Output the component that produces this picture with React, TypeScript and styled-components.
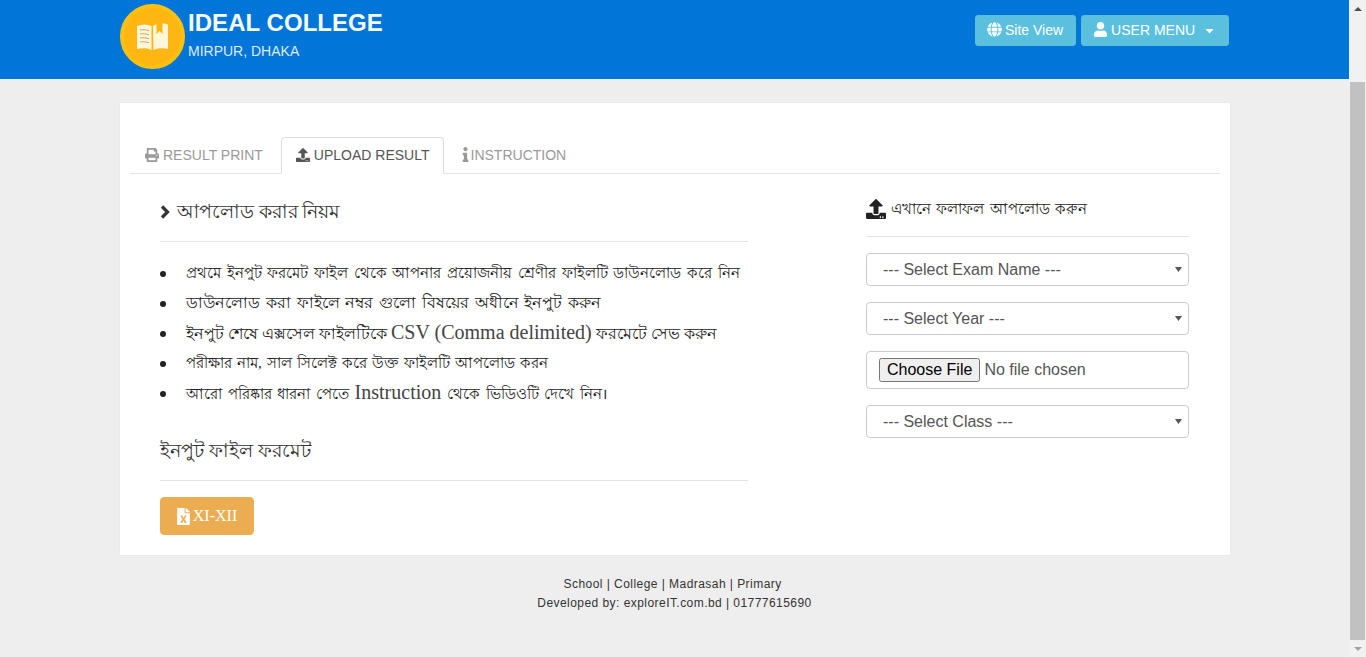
import React from "react";
import styled, { createGlobalStyle } from "styled-components";
import { FaFileExcel, FaGlobe, FaInfo, FaPrint, FaUpload, FaUser, FaCaretDown } from "react-icons/fa";

const Global = createGlobalStyle`
  html, body { margin: 0; padding: 0; height: 100%; overflow: hidden; background: #eeeeee; }
  body { font-family: "Liberation Sans", Arial, sans-serif; font-size: 14px; color: #333; }
  * { box-sizing: border-box; }
`;

const Shell = styled.div`display: flex; height: 657px; width: 1366px;`;
const Page = styled.div`flex: 1; min-width: 0; display: flex; flex-direction: column;`;

const Scrollbar = styled.div`
  width: 17px; background: #f1f1f1; display: flex; flex-direction: column; align-items: center;
`;
const ScrollArrow = styled.div<{ $down?: boolean }>`
  height: 17px; width: 100%; display: flex; align-items: center; justify-content: center;
  &::before {
    content: ""; width: 0; height: 0; border-left: 4px solid transparent; border-right: 4px solid transparent;
    ${(p) => (p.$down ? "border-top: 4px solid #a3a3a3;" : "border-bottom: 4px solid #505050;")}
  }
`;
const ScrollThumb = styled.div`width: 15px; margin-top: 65px; flex: 1; background: #c1c1c1;`;

const Header = styled.header`
  height: 80px; background: #0275d8; flex: none; padding: 4px 120px 0; display: flex; justify-content: space-between;
  border-bottom: 1px solid #e4f1f8;
`;
const Brand = styled.div`display: flex; gap: 3px;`;
const Logo = styled.div`
  width: 65px; height: 65px; border-radius: 50%; background: #ffb612; border: 4px solid #fec10f;
  display: flex; align-items: center; justify-content: center;
`;
const BrandText = styled.div`color: #fff; display: flex; flex-direction: column;`;
const CollegeName = styled.h1`margin: 5px 0 0; font-size: 24px; line-height: 27px; font-weight: 700; color: #f6fbff; letter-spacing: .05px;`;
const CollegePlace = styled.div`margin-top: 7px; font-size: 14px; line-height: 16px; color: #dcecfa;`;
const Actions = styled.div`display: flex; gap: 5px; padding: 11px 0 0 0;`;
const HeadButton = styled.button`
  height: 31px; border: 1px solid #5bc0de; border-radius: 3px; background: #5bc0de; color: #fff;
  font: 14px "Liberation Sans", Arial, sans-serif; display: inline-flex; align-items: center; gap: 3px;
  padding: 0 12px 2px 11px;
`;
const Caret = styled(FaCaretDown)`margin-left: 1px; margin-top: 1px;`;

const Main = styled.main`flex: 1; padding: 23px 119px 0 120px;`;
const Card = styled.section`
  width: 1110px; height: 452px; background: #fff; padding: 34px 10px 0; box-shadow: 0 0 1px rgba(0,0,0,.12);
`;
const Tabs = styled.nav`display: flex; gap: 2px; height: 37px; border-bottom: 1px solid #e4e4e4;`;
const Tab = styled.div<{ $active?: boolean }>`
  height: 37px; padding: 0 ${(p) => (p.$active ? 13 : 15)}px 2px 14px; display: flex; align-items: center; gap: 4px; font-size: 14px;
  border: 1px solid ${(p) => (p.$active ? "#ddd" : "transparent")};
  border-bottom: 1px solid ${(p) => (p.$active ? "#fff" : "transparent")};
  border-radius: 4px 4px 0 0;
  color: ${(p) => (p.$active ? "#555" : "#999")};
  background: ${(p) => (p.$active ? "#fff" : "transparent")};
`;
const InfoIcon = styled(FaInfo)`width: 7px; height: 15px; margin: 0 -2px 0 1px;`;
const Columns = styled.div`display: flex; padding-left: 30px; gap: 118px;`;
const LeftCol = styled.div`width: 588px;`;
const RightCol = styled.div`width: 323px;`;

const Heading = styled.h3<{ $top: number; $size: number }>`
  margin: ${(p) => p.$top}px 0 0; font-weight: 400; font-size: ${(p) => p.$size}px; line-height: 26px; color: #333;
  font-family: "Liberation Serif", "Noto Sans", serif; display: flex; align-items: center; gap: 7px;
`;
const Rule = styled.hr<{ $top: number; $bottom: number }>`
  border: 0; border-top: 1px solid #e3e3e3; margin: ${(p) => p.$top}px 0 ${(p) => p.$bottom}px;
`;
const Rules = styled.ul`
  list-style: none; margin: 0 0 30px; padding: 0;
`;
const RuleItem = styled.li<{ $spread?: number; $size?: number }>`
  height: 30px; line-height: 30px; font-size: ${(p) => p.$size ?? 16}px; white-space: nowrap; color: #222;
  font-family: "Liberation Serif", "Noto Sans", serif;
  word-spacing: ${(p) => p.$spread ?? 0}px;
  display: flex; align-items: center; gap: 20px;
  &::before { content: ""; width: 6px; height: 6px; border-radius: 50%; background: #222; flex: none; margin-top: 2px; }
`;
const RuleText = styled.span``;
const Latin = styled.span`font-size: 20px; color: #444; word-spacing: 0;`;
const ExcelButton = styled.button`
  width: 94px; height: 38px; background: #ecac52; border: 1px solid #ecac52; border-radius: 4px; color: #fff;
  font: 16px "Liberation Serif", serif; display: flex; align-items: center; justify-content: center; gap: 3px; padding: 0;
`;
const ExcelIcon = styled(FaFileExcel)`width: 13px; height: 17px;`;
const SideHeading = styled.h4`
  margin: 22px 0 0; height: 26px; font-weight: 400; font-size: 15px; color: #222; display: flex; align-items: center; gap: 5px; word-spacing: 1.5px;
  font-family: "Liberation Serif", "Noto Sans", serif;
`;
const Field = styled.select`
  display: block; width: 100%; height: 33px; border: 1px solid #ccc; border-radius: 4px; color: #555;
  font: 16px "Liberation Sans", Arial, sans-serif; padding: 0 12px 0 16px; margin-bottom: 16px;
  appearance: none;
  background: #fff url("data:image/svg+xml,%3Csvg xmlns='http://www.w3.org/2000/svg' width='7' height='5'%3E%3Cpath d='M0 0h7L3.500 5z' fill='%23555'/%3E%3C/svg%3E") no-repeat right 6px center;
`;
const FileField = styled.input`
  display: block; width: 100%; height: 38px; border: 1px solid #ccc; border-radius: 4px; background: #fff; color: #555;
  font: 16px "Liberation Sans", Arial, sans-serif; padding: 6px 12px; margin-bottom: 16px;
`;
const Footer = styled.footer`
  margin-top: 20px; padding-right: 1px; text-align: center; font-size: 12px; line-height: 19px; letter-spacing: .45px; color: #333;
`;

const BookIcon = () => (
  <svg width="31" height="27" viewBox="0 0 31 27" fill="none">
    <path d="M0 3c5-2 10-2 14.500 0v24c-4.500-2-9.500-2-14.500-1z" fill="#fff6dc" />
    <path d="M16 3c1-.8 2-1.300 3.500-1.700V11l3-3 3 3V.3c2 .2 3.500.6 5.500 1.400V26c-5-1-10.500-1-14.500 1z" fill="#fff6dc" />
    <path d="M3 7c3-.5 6-.3 9 .8M3 11c3-.5 6-.3 9 .8M3 15c3-.5 6-.3 9 .8M3 19c3-.5 6-.3 9 .8" stroke="#cfa650" strokeWidth="1" />
  </svg>
);

const ChevronIcon = () => (
  <svg width="10" height="14" viewBox="0 0 10 14" fill="none">
    <path d="M2 1.500 7.500 7 2 12.500" stroke="#333" strokeWidth="3.200" />
  </svg>
);

export default function App() {
  return (
    <Shell>
      <Global />
      <Page>
        <Header>
          <Brand>
            <Logo><BookIcon /></Logo>
            <BrandText>
              <CollegeName>IDEAL COLLEGE</CollegeName>
              <CollegePlace>MIRPUR, DHAKA</CollegePlace>
            </BrandText>
          </Brand>
          <Actions>
            <HeadButton><FaGlobe size={15} /> Site View</HeadButton>
            <HeadButton><FaUser size={15} /> USER MENU&nbsp;<Caret size={13} /></HeadButton>
          </Actions>
        </Header>
        <Main>
          <Card>
            <Tabs>
              <Tab><FaPrint size={14} /> RESULT PRINT</Tab>
              <Tab $active><FaUpload size={14} /> UPLOAD RESULT</Tab>
              <Tab><InfoIcon /> INSTRUCTION</Tab>
            </Tabs>
            <Columns>
              <LeftCol>
                <Heading $top={25} $size={18.5}><ChevronIcon /> আপলোড করার নিয়ম</Heading>
                <Rule $top={16} $bottom={16} />
                <Rules>
                  <RuleItem $size={15} $spread={1.95}><RuleText>প্রথমে ইনপুট ফরমেট ফাইল থেকে আপনার প্রয়োজনীয় শ্রেণীর ফাইলটি ডাউনলোড করে নিন</RuleText></RuleItem>
                  <RuleItem $spread={1.75}><RuleText>ডাউনলোড করা ফাইলে নম্বর গুলো বিষয়ের অধীনে ইনপুট করুন</RuleText></RuleItem>
                  <RuleItem><RuleText>ইনপুট শেষে এক্সসেল ফাইলটিকে <Latin>CSV (Comma delimited)</Latin> ফরমেটে সেভ করুন</RuleText></RuleItem>
                  <RuleItem $size={15} $spread={1.3}><RuleText>পরীক্ষার নাম, সাল সিলেক্ট করে উক্ত ফাইলটি আপলোড করন</RuleText></RuleItem>
                  <RuleItem $size={15} $spread={1.9}><RuleText>আরো পরিষ্কার ধারনা পেতে <Latin>Instruction</Latin> থেকে ভিডিওটি দেখে নিন।</RuleText></RuleItem>
                </Rules>
                <Heading $top={0} $size={19}>ইনপুট ফাইল ফরমেট</Heading>
                <Rule $top={16} $bottom={16} />
                <ExcelButton><ExcelIcon /> XI-XII</ExcelButton>
              </LeftCol>
              <RightCol>
                <SideHeading><FaUpload size={20} /> এখানে ফলাফল আপলোড করুন</SideHeading>
                <Rule $top={14} $bottom={16} />
                <Field><option>--- Select Exam Name ---</option></Field>
                <Field><option>--- Select Year ---</option></Field>
                <FileField type="file" />
                <Field><option>--- Select Class ---</option></Field>
              </RightCol>
            </Columns>
          </Card>
          <Footer>
            School | College | Madrasah | Primary&nbsp;<br />
            Developed by: exploreIT.com.bd | 01777615690
          </Footer>
        </Main>
      </Page>
      <Scrollbar>
        <ScrollArrow />
        <ScrollThumb />
        <ScrollArrow $down />
      </Scrollbar>
    </Shell>
  );
}
